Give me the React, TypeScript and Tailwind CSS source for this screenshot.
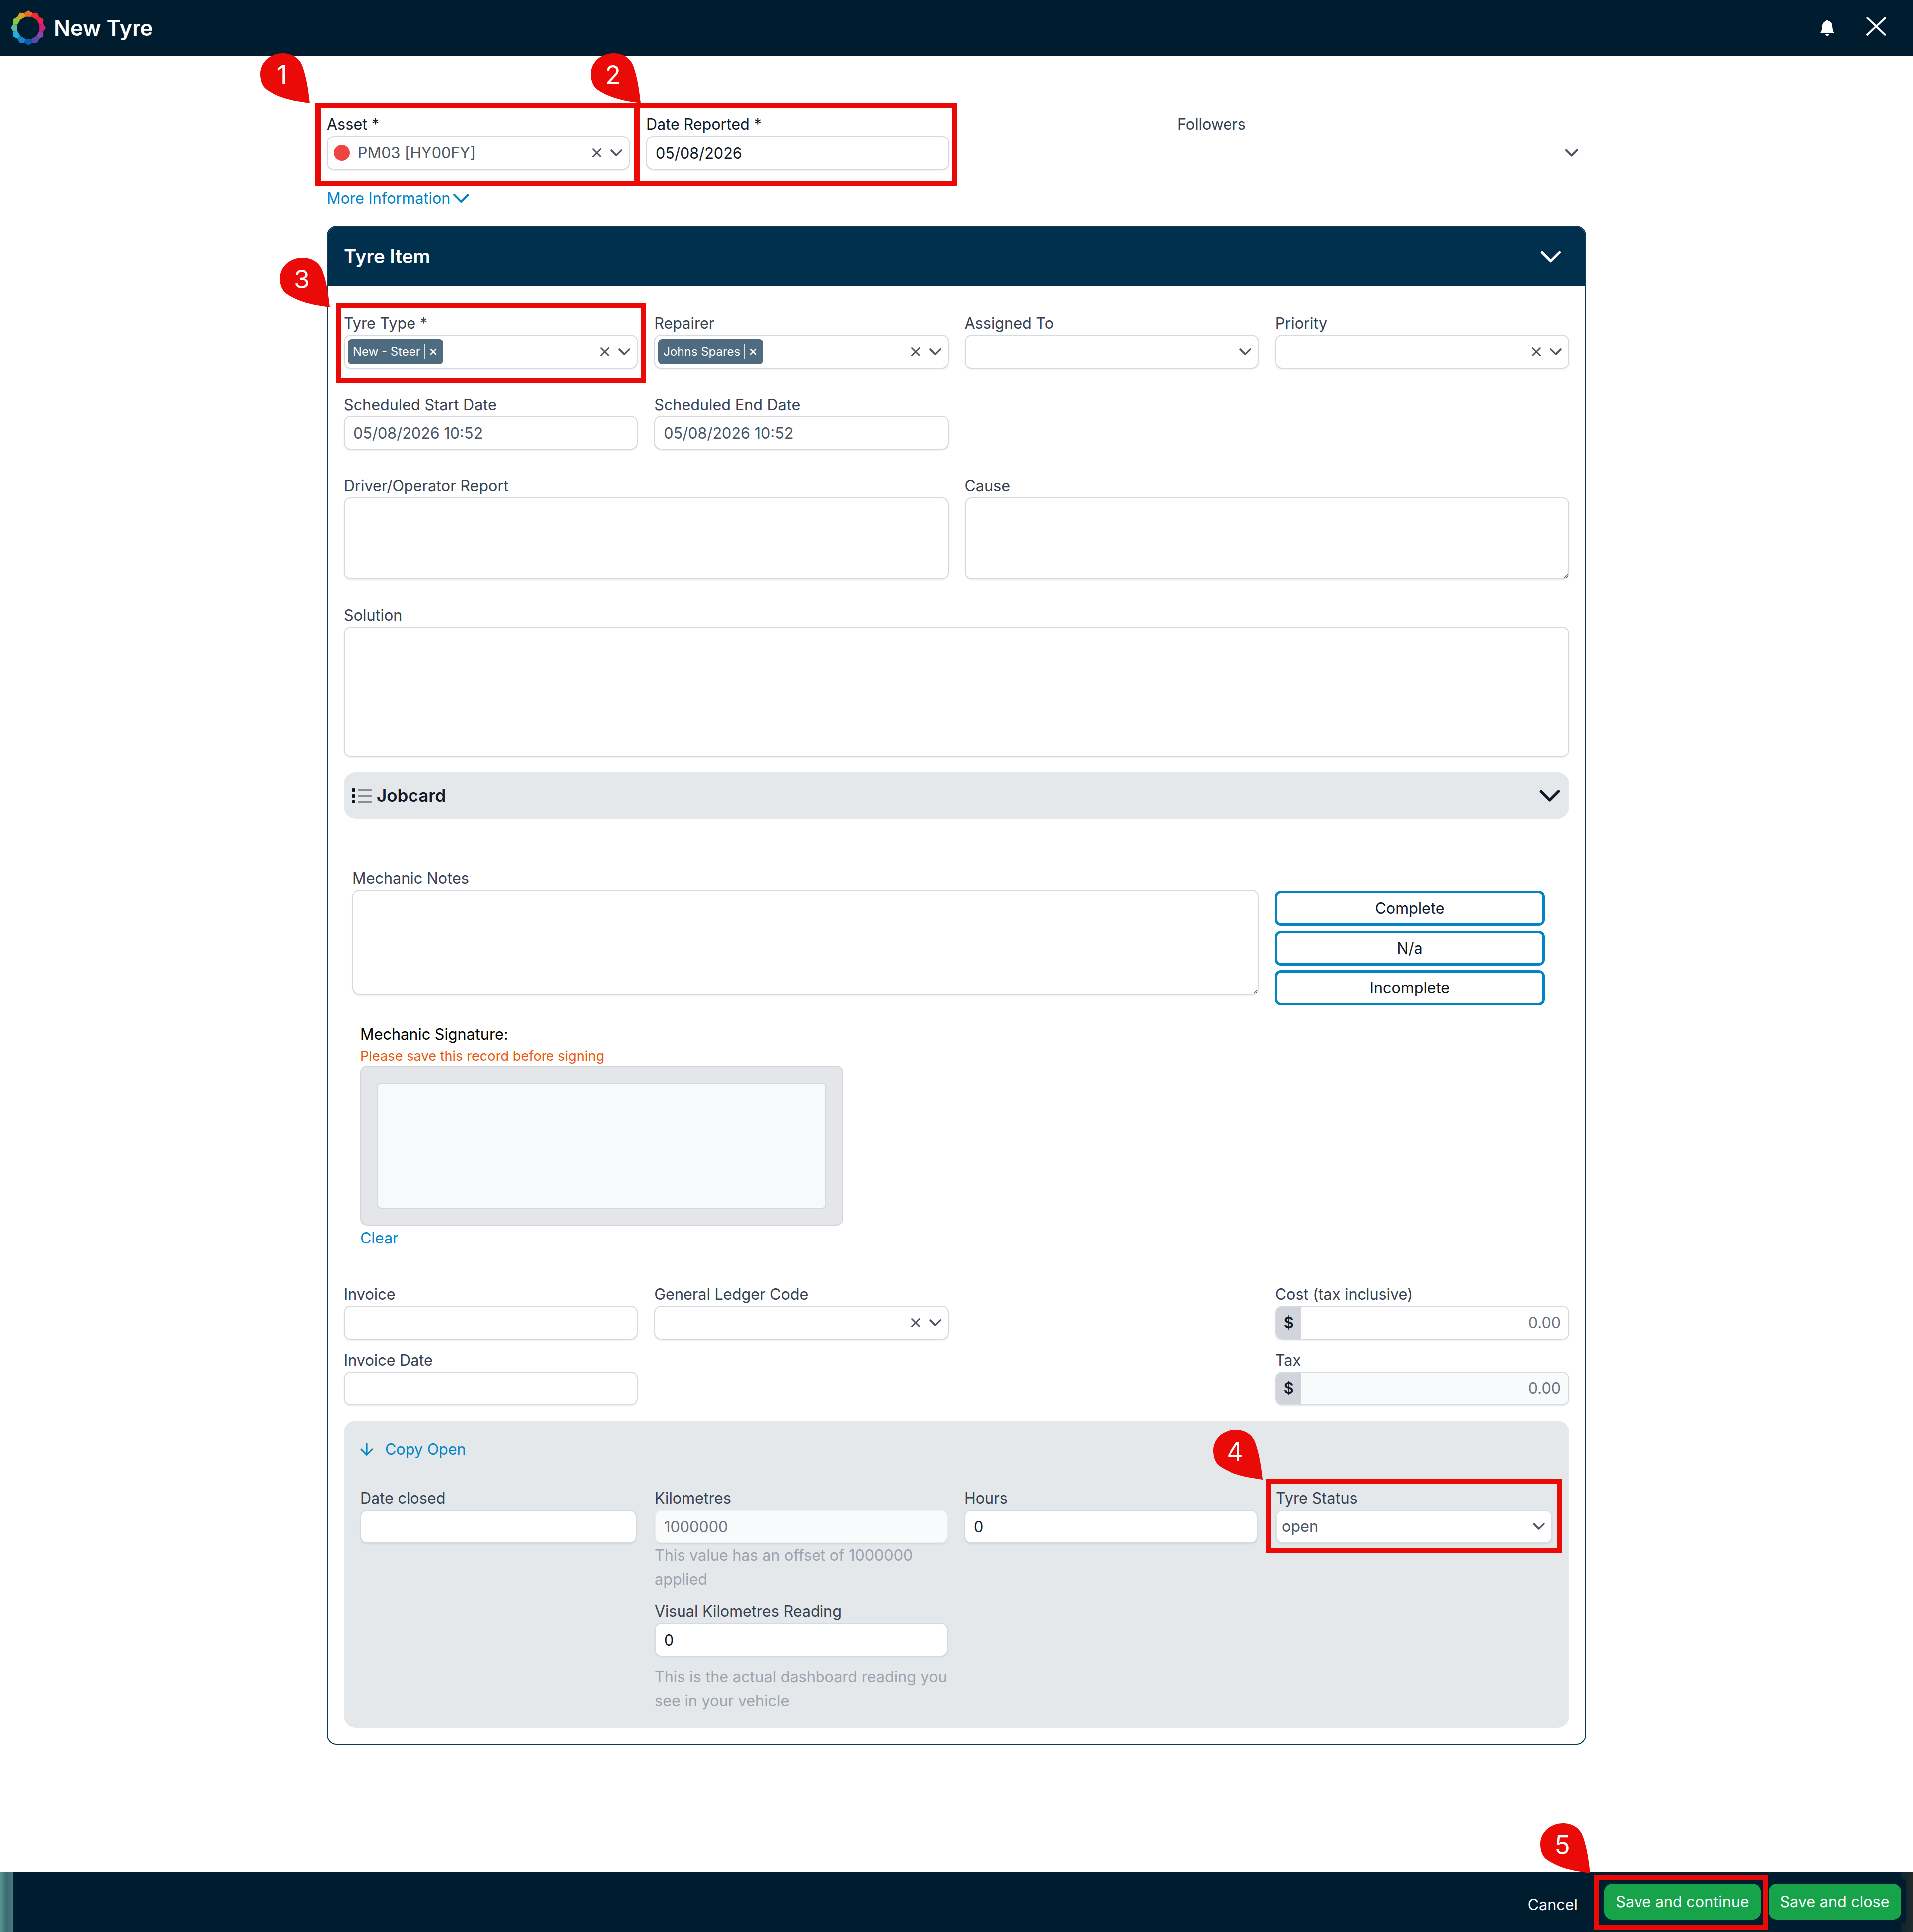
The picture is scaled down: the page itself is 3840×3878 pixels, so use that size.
import { ChevronDown, X, ArrowDown } from 'lucide-react';
import { BsBellFill } from 'react-icons/bs';
import type { ReactNode } from 'react';

const inputBase =
  'block w-full h-[68px] px-[17px] rounded-[14px] border-2 text-[30.6px] shadow-[0_2px_3px_rgba(0,0,0,0.07)] outline-none';
const inputCls = `${inputBase} border-[#d7d9df] bg-white text-[#111827]`;
const inputMuted = `${inputBase} border-[#d7d9df] bg-white text-[#4b5563]`;
const inputOff = `${inputBase} border-[#eceef1] bg-[#f9fafb] text-[#6b7280]`;
const areaCls =
  'block w-full rounded-[14px] border-2 border-[#d7d9df] bg-white shadow-[0_2px_3px_rgba(0,0,0,0.07)] outline-none';

// clockwise from the top point of the logo ring
const LOGO_COLORS = ['#e8692a', '#f02a2e', '#ee2250', '#cf1f7f', '#8a45a5', '#5a4aa8', '#0b5fa8', '#1583cc', '#25aee0', '#5fb89a', '#8cc63f', '#e0a020'];

function Logo() {
  const cx = 35;
  const cy = 35;
  const pt = (r: number, deg: number) => {
    const a = ((deg - 90) * Math.PI) / 180;
    return `${cx + r * Math.cos(a)},${cy + r * Math.sin(a)}`;
  };
  return (
    <svg width="70" height="70" viewBox="0 0 70 70">
      {LOGO_COLORS.map((c, i) => {
        const start = i * 30 - 15;
        return <polygon key={i} fill={c} points={`${pt(35, start + 15)} ${pt(31, start + 30)} ${pt(23, start + 30)} ${pt(23, start)} ${pt(31, start)}`} />;
      })}
    </svg>
  );
}

function Pin({ n, className }: { n: number; className: string }) {
  return (
    <div className={`absolute w-[100px] h-[100px] ${className}`}>
      <svg width="100" height="100" viewBox="0 0 100 100" className="absolute inset-0">
        <path d="M100 100C97 72 93 48 86 28C80 8 62 0 46 0C20 0 0 18 0 42C0 54 4 66 12 72C38 90 65 95 100 100Z" fill="#ea0a08" />
      </svg>
      <span className="absolute left-[16px] top-[15px] w-[56px] text-center text-[52px] leading-[58px] text-white">{n}</span>
    </div>
  );
}

function Label({ children, className = '' }: { children: ReactNode; className?: string }) {
  return <label className={`block h-[47px] leading-[47px] text-[30.6px] whitespace-nowrap ${className}`}>{children}</label>;
}

function Tag({ text }: { text: string }) {
  return (
    <span className="flex items-center h-[50px] px-[10px] rounded-[8px] bg-[#4f6b80] text-white text-[24px] whitespace-nowrap">
      {text}
      <span className="mx-[7px] w-[2px] h-[30px] bg-white/80" />
      <X className="w-[20px] h-[20px]" strokeWidth={3} />
    </span>
  );
}

function SelectBox({ children, clear = true }: { children?: ReactNode; clear?: boolean }) {
  return (
    <div className="flex items-center h-[68px] pl-[6px] pr-[5px] rounded-[14px] border-2 border-[#d7d9df] bg-white shadow-[0_2px_3px_rgba(0,0,0,0.07)]">
      <div className="flex-1 flex items-center min-w-0">{children}</div>
      {clear && <X className="w-[30px] h-[30px] text-[#4b5563] mr-[4px]" strokeWidth={2.4} />}
      <ChevronDown className="w-[40px] h-[40px] text-[#4b5563]" strokeWidth={2.2} />
    </div>
  );
}

function MoneyField({ label, muted }: { label: string; muted?: boolean }) {
  return (
    <div>
      <Label className="text-[#374151]">{label}</Label>
      <div className="flex h-[68px] rounded-[14px] overflow-hidden border-2 border-[#d7d9df] shadow-[0_2px_3px_rgba(0,0,0,0.07)]">
        <span className="flex items-center justify-center w-[50px] bg-[#d1d5db] text-[30.6px] font-semibold text-[#111827]">$</span>
        <span className={`flex-1 flex items-center justify-end pr-[15px] text-[30.6px] text-[#6b7280] ${muted ? 'bg-[#f9fafb]' : 'bg-white'}`}>0.00</span>
      </div>
    </div>
  );
}

function JobButton({ text }: { text: string }) {
  return (
    <button className="block w-full h-[70px] rounded-[12px] border-[5px] border-[#0284c7] bg-white text-[30.6px] text-[#111827]">{text}</button>
  );
}

export default function App() {
  return (
    <div className="relative w-[3840px] h-[3878px] flex flex-col overflow-hidden bg-white font-['Inter',sans-serif]">
      <header className="flex items-center h-[112px] shrink-0 bg-[#001d30] pl-[22px] pr-[54px] text-white">
        <Logo />
        <h1 className="ml-[16px] mt-[2px] text-[43.5px] font-semibold">New Tyre</h1>
        <BsBellFill className="ml-auto w-[32px] h-[32px] mr-[62px]" />
        <svg width="40" height="38" viewBox="0 0 40 38" className="-mt-[6px]">
          <path d="M1 1L39 37M39 1L1 37" stroke="#fff" strokeWidth="4" fill="none" />
        </svg>
      </header>

      <main className="flex-1 pl-[656px] pr-[656px] pt-[113px]">
        <div className="flex">
          <div className="w-[608px]">
            <Label className="h-[48px] text-[#111827]">Asset *</Label>
            <SelectBox>
              <span className="ml-[6px] w-[32px] h-[32px] rounded-full bg-[#ef4444]" />
              <span className="ml-[16px] text-[30.6px] text-[#4b5563]">PM03 [HY00FY]</span>
            </SelectBox>
          </div>
          <div className="w-[608px] ml-[33px]">
            <Label className="h-[48px] text-[#111827]">Date Reported *</Label>
            <input readOnly defaultValue="05/08/2026" className={inputCls} />
          </div>
          <div className="flex-1 ml-[458px]">
            <Label className="h-[48px] text-[#374151]">Followers</Label>
            <div className="flex items-center justify-end h-[68px] pr-[7px]">
              <ChevronDown className="w-[44px] h-[44px] text-[#4b5563]" strokeWidth={2.2} />
            </div>
          </div>
        </div>

        <a className="flex items-center mt-[33px] h-[48px] text-[30.6px] text-[#0284c7]">
          More Information
          <ChevronDown className="-ml-[6px] w-[56px] h-[56px]" strokeWidth={1.7} />
        </a>

        <section className="mt-[31px] rounded-[20px] border-2 border-[#0b3a52] overflow-hidden">
          <div className="flex items-center justify-between h-[119px] pl-[32px] pr-[34px] bg-[#012f4e] text-white">
            <h2 className="text-[38.4px] font-semibold">Tyre Item</h2>
            <ChevronDown className="w-[70px] h-[70px]" strokeWidth={1.8} />
          </div>

          <div className="px-[32px] pt-[51px] pb-[32px]">
            <div className="grid grid-cols-4 gap-x-[33px] gap-y-[48px] text-[#374151]">
              <div>
                <Label>Tyre Type *</Label>
                <SelectBox>
                  <Tag text="New - Steer" />
                </SelectBox>
              </div>
              <div>
                <Label>Repairer</Label>
                <SelectBox>
                  <Tag text="Johns Spares" />
                </SelectBox>
              </div>
              <div>
                <Label>Assigned To</Label>
                <SelectBox clear={false} />
              </div>
              <div>
                <Label>Priority</Label>
                <SelectBox />
              </div>

              <div>
                <Label>Scheduled Start Date</Label>
                <input readOnly defaultValue="05/08/2026 10:52" className={inputMuted} />
              </div>
              <div>
                <Label>Scheduled End Date</Label>
                <input readOnly defaultValue="05/08/2026 10:52" className={inputMuted} />
              </div>
              <div className="col-span-2" />

              <div className="col-span-2">
                <Label>Driver/Operator Report</Label>
                <textarea className={`${areaCls} h-[165px]`} />
              </div>
              <div className="col-span-2">
                <Label>Cause</Label>
                <textarea className={`${areaCls} h-[165px]`} />
              </div>

              <div className="col-span-4">
                <Label>Solution</Label>
                <textarea className={`${areaCls} h-[261px]`} />
              </div>
            </div>

            <div className="flex items-center h-[93px] mt-[31px] pl-[16px] pr-[4px] rounded-[24px] bg-[#e5e8eb]">
              <svg width="40" height="30" viewBox="0 0 40 30" className="mr-[10px]">
                <rect x="0" y="0" width="7" height="7" rx="2" fill="#111" />
                <rect x="0" y="12" width="7" height="7" rx="2" fill="#111" />
                <rect x="0" y="24" width="7" height="7" rx="2" fill="#111" />
                <rect x="12" y="1" width="28" height="5" rx="2" fill="#8a8d91" />
                <rect x="12" y="13" width="28" height="5" rx="2" fill="#8a8d91" />
                <rect x="12" y="25" width="28" height="5" rx="2" fill="#8a8d91" />
              </svg>
              <h3 className="text-[35px] font-semibold text-[#111827]">Jobcard</h3>
              <ChevronDown className="ml-auto w-[70px] h-[70px] text-[#111827]" strokeWidth={1.9} />
            </div>

            <div className="flex gap-[32px] mt-[96px] pl-[17px] text-[#374151]">
              <div className="w-[1820px]">
                <Label>Mechanic Notes</Label>
                <textarea className={`${areaCls} h-[211px]`} />
              </div>
              <div className="w-[542px] pt-[49px] flex flex-col gap-[10px]">
                <JobButton text="Complete" />
                <JobButton text="N/a" />
                <JobButton text="Incomplete" />
              </div>
            </div>

            <div className="mt-[34px] pl-[33px]">
              <div className="h-[48px] leading-[48px] text-[30.6px] text-black">Mechanic Signature:</div>
              <div className="mt-[1px] h-[38px] leading-[38px] text-[27.2px] text-[#ea580c]">Please save this record before signing</div>
              <div className="w-[970px] h-[321px] pt-[32px] px-[32px] rounded-[14px] border-2 border-[#d1d5db] bg-[#e4e6ea]">
                <div className="h-[253px] rounded-[8px] border-2 border-[#d7d9df] bg-[#f7f9fc]" />
              </div>
              <a className="block mt-[1px] h-[48px] leading-[48px] text-[30.6px] text-[#0284c7]">Clear</a>
            </div>

            <div className="grid grid-cols-4 gap-x-[33px] gap-y-[17px] mt-[65px] text-[#374151]">
              <div>
                <Label>Invoice</Label>
                <input readOnly className={inputCls} />
              </div>
              <div>
                <Label>General Ledger Code</Label>
                <SelectBox />
              </div>
              <div />
              <MoneyField label="Cost (tax inclusive)" />
              <div>
                <Label>Invoice Date</Label>
                <input readOnly className={inputCls} />
              </div>
              <div />
              <div />
              <MoneyField label="Tax" muted />
            </div>

            <div className="mt-[31px] h-[616px] pt-[33px] px-[33px] rounded-[24px] bg-[#e5e8eb] text-[#374151]">
              <a className="flex items-center h-[48px] text-[30.6px] text-[#0284c7]">
                <ArrowDown className="w-[38px] h-[38px] -ml-[6px] mr-[18px]" strokeWidth={2} />
                Copy Open
              </a>
              <div className="grid grid-cols-[555px_590px_589px_555px] gap-x-[34px] mt-[50px]">
                <div>
                  <Label>Date closed</Label>
                  <input readOnly className={inputCls} />
                </div>
                <div className="pl-[2px]">
                  <Label>Kilometres</Label>
                  <input readOnly defaultValue="1000000" className={inputOff} />
                  <p className="text-[30.6px] leading-[48px] text-[#9ca3af]">This value has an offset of 1000000 applied</p>
                  <Label className="mt-[16px]">Visual Kilometres Reading</Label>
                  <input readOnly defaultValue="0" className={inputCls} />
                  <p className="mt-[17px] text-[30.6px] leading-[48px] text-[#9ca3af]">This is the actual dashboard reading you see in your vehicle</p>
                </div>
                <div>
                  <Label>Hours</Label>
                  <input readOnly defaultValue="0" className={inputCls} />
                </div>
                <div className="ml-[2px] -mr-[2px]">
                  <Label>Tyre Status</Label>
                  <div className="flex items-center justify-between h-[68px] pl-[10px] pr-[5px] rounded-[14px] border-2 border-[#dcdee3] bg-white text-[30.6px] text-[#4b5563] shadow-[0_2px_3px_rgba(0,0,0,0.07)]">
                    open
                    <ChevronDown className="w-[40px] h-[40px]" strokeWidth={2.2} />
                  </div>
                </div>
              </div>
            </div>
          </div>
        </section>
      </main>

      <footer className="relative flex items-start justify-end gap-[16px] h-[120px] shrink-0 bg-[#001d30] pt-[23px] pr-[24px] text-white">
        <div className="mr-auto w-[26px] h-[120px] -mt-[23px] bg-gradient-to-r from-[#5a9a94] via-[#3a6a72] to-[#447c7c]" />
        <div className="absolute right-0 top-0 bottom-0 w-[25px] bg-gradient-to-r from-[#0c2530] to-[#222b2a]" />
        <div className="absolute right-[14px] top-[13px] w-[20px] h-[88px] bg-[#001d30]" />
        <a className="mt-[27px] mr-[37px] text-[30.6px] leading-[30px]">Cancel</a>
        <button className="relative h-[72px] w-[314px] rounded-[16px] bg-[#16a34a] text-[30.6px] text-white">Save and continue</button>
        <button className="relative h-[72px] w-[266px] rounded-[16px] bg-[#16a34a] text-[30.6px] text-white">Save and close</button>
      </footer>

      <div className="absolute left-[633px] top-[206px] w-[651px] h-[168px] border-[11px] border-[#ea0a08]" />
      <div className="absolute left-[1273px] top-[206px] w-[649px] h-[168px] border-[11px] border-[#ea0a08]" />
      <div className="absolute left-[674px] top-[608px] w-[623px] h-[161px] border-[10px] border-[#ea0a08]" />
      <div className="absolute left-[2542px] top-[2969px] w-[594px] h-[149px] border-[10px] border-[#ea0a08]" />
      <div className="absolute left-[3199px] top-[3764px] w-[349px] h-[110px] border-[10px] border-[#ea0a08]" />

      <Pin n={1} className="left-[522px] top-[107px]" />
      <Pin n={2} className="left-[1186px] top-[107px]" />
      <Pin n={3} className="left-[562px] top-[517px]" />
      <Pin n={4} className="left-[2435px] top-[2870px]" />
      <Pin n={5} className="left-[3092px] top-[3660px]" />
    </div>
  );
}
